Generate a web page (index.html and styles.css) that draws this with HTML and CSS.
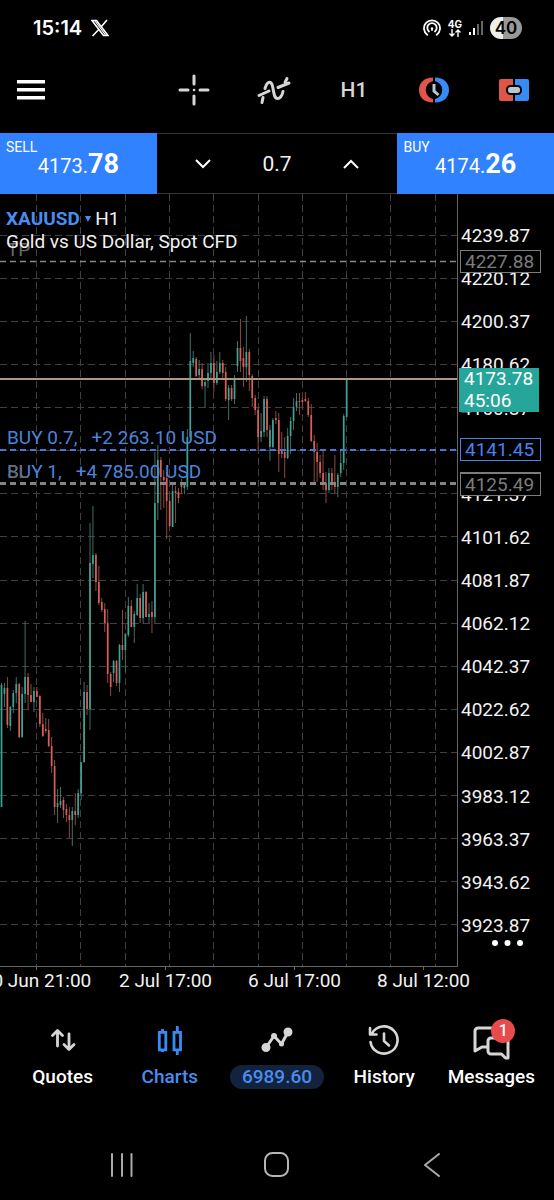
FILE: index.html
```
<!DOCTYPE html>
<html lang="en">
<head>
<meta charset="utf-8">
<meta name="viewport" content="width=device-width, initial-scale=1">
<title>XAUUSD H1</title>
<link rel="stylesheet" href="styles.css">
</head>
<body>
<div class="app">
  <header class="status">
    <div class="status-group">
      <span class="clock">15:14</span>
      <svg class="x-logo" width="18" height="18" viewBox="0 0 18 18" fill="none" stroke="#fff"><path stroke-width="1.600" d="M1 1.500h4.500L17 16.500h-4.500zM16 1L10.200 7.800M7.800 10.500L1.500 17"/><path stroke-width="1.200" d="M4 2L14.500 16"/></svg>
    </div>
    <div class="status-group status-right">
      <svg width="18" height="18" viewBox="0 0 18 18" fill="none" stroke="#fff" stroke-width="1.800" stroke-linecap="round"><path d="M4.300 15.800A8 8 0 1 1 13.700 15.800M6 12.500A4.700 4.700 0 1 1 12 12.500"/><circle cx="9" cy="9.500" r="1.200" fill="#fff" stroke="none"/><path d="M9 10v1"/></svg>
      <span class="network"><span>4G</span><svg width="12" height="8" viewBox="0 0 12 8" fill="none" stroke="#fff" stroke-width="1.400"><path d="M3 0v7M.5 4.500L3 7l2.500-2.500M9 8V1M6.500 3.500L9 1l2.500 2.500"/></svg></span>
      <svg width="14" height="16" viewBox="0 0 14 16"><path fill="#fff" d="M0 12h2v3H0zM4 8h2v7H4z"/><path fill="#666" d="M8 4h2v11H8zM12 1h2v14h-2z"/></svg>
      <span class="battery">40</span>
    </div>
  </header>

  <nav class="toolbar" aria-label="Chart tools">
    <button class="menu" aria-label="Menu"><svg width="28" height="20" viewBox="0 0 28 20" fill="#fff"><path d="M0 0h28v3.500H0zM0 8h28v3.500H0zM0 16h28v3.500H0z"/></svg></button>
    <div class="tools">
      <button aria-label="Crosshair"><svg width="32" height="32" viewBox="0 0 32 32" stroke="#d6d6d6" stroke-width="3" stroke-linecap="round"><path d="M16 2v8M16 22v8M2 16h8M22 16h8"/><path stroke-width="2.500" d="M16 16h.1"/></svg></button>
      <button aria-label="Indicators"><svg width="34" height="32" viewBox="0 0 34 32" fill="none" stroke="#d6d6d6" stroke-width="3" stroke-linecap="round"><path d="M2 21.500L12 17M21 13.500L32 9M5 28.500l1-5M8 14.500C10 7.500 14 6 15.500 12 17 19 17 24.500 20.500 24.500 23.500 24.500 25 22 26 17.500M28 8.500l2-4"/></svg></button>
      <button class="timeframe">H1</button>
      <button aria-label="Trading session"><svg width="32" height="26" viewBox="0 0 32 26" fill="none"><path fill="#df5549" d="M15 .5C6 .5 1 6 1 13s5 12.500 14 12.500V22a9.200 9.200 0 0 1 0-18z"/><path fill="#388bf5" d="M17 .5C26 .5 31 6 31 13S26 25.500 17 25.500V22a9.200 9.200 0 0 0 0-18z"/><path d="M16 7v7l4.500 4" stroke="#b9c8cf" stroke-width="3"/></svg></button>
      <button aria-label="One click trading"><svg width="32" height="24" viewBox="0 0 32 24"><path fill="#df5549" d="M3 1h12v22H3a2 2 0 0 1-2-2V3a2 2 0 0 1 2-2z"/><path fill="#388bf5" d="M17 1h12a2 2 0 0 1 2 2v18a2 2 0 0 1-2 2H17z"/><rect x="9" y="8" width="14" height="8" rx="3.500" fill="#b9c8cf" stroke="#000" stroke-width="2"/></svg></button>
    </div>
  </nav>

  <section class="trade" aria-label="One click trading">
    <button class="deal"><span class="deal-side">SELL</span><span class="deal-price">4173.<b>78</b></span></button>
    <div class="stepper">
      <button aria-label="Decrease volume"><svg width="16" height="10" viewBox="0 0 16 10" fill="none" stroke="#fff" stroke-width="2"><path d="M1 1l7 7 7-7"/></svg></button>
      <input type="text" value="0.7" aria-label="Volume">
      <button aria-label="Increase volume"><svg width="16" height="10" viewBox="0 0 16 10" fill="none" stroke="#fff" stroke-width="2"><path d="M1 9l7-7 7 7"/></svg></button>
    </div>
    <button class="deal"><span class="deal-side">BUY</span><span class="deal-price">4174.<b>26</b></span></button>
  </section>

  <main class="chart">
    <div class="plot">
      <svg class="plot-canvas" viewBox="0 194 458 773" preserveAspectRatio="none" role="img" aria-label="XAUUSD hourly candles">
        <g id="grid"></g>
        <g id="candles"></g>
        <g id="levels" fill="none">
          <path d="M0 261.500H457" stroke="#888" stroke-width="1.400" stroke-dasharray="6 4"/>
          <path d="M0 450H457" stroke="#4478dc" stroke-width="2" stroke-dasharray="6 4"/>
          <path d="M0 483.500H457" stroke="#858585" stroke-width="3" stroke-dasharray="6 4"/>
          <path d="M0 379H457" stroke="#ad9688" stroke-width="2"/>
        </g>
        <path d="M457.500 194V966.500" stroke="#666" fill="none"/>
        <path d="M0 966.500H458" stroke="#666" fill="none"/>
      </svg>
      <span class="order order-muted tp">TP</span>
      <span class="order first">BUY 0.7,&nbsp;&nbsp; +2 263.10 USD</span>
      <span class="order second">BUY 1,&nbsp;&nbsp; +4 785.00 USD</span>
      <span class="order order-muted sl">SL</span>
      <div class="title">
        <div><button class="symbol">XAUUSD <svg width="6" height="6" viewBox="0 0 6 6"><path fill="#4a8cf0" d="M0 0h6L3 6z"/></svg></button> H1</div>
        <div>Gold vs US Dollar, Spot CFD</div>
      </div>
    </div>
    <div class="prices">
      <span>4239.87</span><span>4220.12</span><span>4200.37</span><span>4180.62</span><span>4160.87</span><span>4141.12</span><span>4121.37</span><span>4101.62</span><span>4081.87</span><span>4062.12</span><span>4042.37</span><span>4022.62</span><span>4002.87</span><span>3983.12</span><span>3963.37</span><span>3943.62</span><span>3923.87</span>
      <div class="tag tag-tp">4227.88</div>
      <div class="tag tag-now">4173.78<br>45:06</div>
      <div class="tag tag-entry">4141.45</div>
      <div class="tag tag-sl">4125.49</div>
      <button class="more" aria-label="More"><svg width="32" height="6" viewBox="0 0 32 6" fill="#fff"><circle cx="3" cy="3" r="3"/><circle cx="15.500" cy="3" r="3"/><circle cx="28" cy="3" r="3"/></svg></button>
    </div>
  </main>
  <div class="dates"><span>30 Jun 21:00</span><span>2 Jul 17:00</span><span>6 Jul 17:00</span><span>8 Jul 12:00</span></div>

  <nav class="tabs" aria-label="Main">
    <a href="#quotes"><svg width="26" height="32" viewBox="0 0 26 32" fill="none" stroke="#d6d6d6" stroke-width="2.800" stroke-linecap="round" stroke-linejoin="round"><path d="M7.500 22V7M2.500 11.500l5-5 5 5M19 10v15M14 20.500l5 5 5-5"/></svg><span>Quotes</span></a>
    <a href="#charts" class="active"><svg width="26" height="32" viewBox="0 0 26 32" fill="none" stroke="#388bf5" stroke-width="2.800"><path d="M2.300 8.300h6.500v17.500H2.300zM5.500 5v3M5.500 26v2M17 8.300h6.500v17.500H17zM20.300 2v6M20.300 26v5"/></svg><span>Charts</span></a>
    <a href="#trade"><svg width="32" height="32" viewBox="0 0 32 32" fill="#d6d6d6" stroke="#d6d6d6" stroke-width="3" stroke-linejoin="round"><path fill="none" d="M5 23.500L13 12l7.500 8L27 8"/><circle cx="5" cy="23.500" r="3"/><circle cx="13" cy="12" r="1.500"/><circle cx="20.500" cy="20" r="1"/><circle cx="27" cy="8" r="3"/></svg><span class="pill">6989.60</span></a>
    <a href="#history"><svg width="34" height="32" viewBox="0 0 34 32" fill="none" stroke="#d6d6d6" stroke-width="2.600" stroke-linecap="round" stroke-linejoin="round"><path d="M5 9.500A13.600 13.600 0 1 1 3.500 18M3 4v6.500H9.500"/><path d="M17 9.500V17l5 4.500"/></svg><span>History</span></a>
    <a href="#messages"><span class="message-icon"><svg width="40" height="36" viewBox="0 0 40 36" fill="none" stroke="#d6d6d6" stroke-width="3" stroke-linejoin="round"><path d="M17 23h-6l-7 4V7a3 3 0 0 1 3-3h20a3 3 0 0 1 3 3v7"/><path d="M17 17a3 3 0 0 1 3-3h17v20h-2.500l-4-4H20a3 3 0 0 1-3-3z"/></svg><span class="badge">1</span></span><span>Messages</span></a>
  </nav>

  <footer class="system">
    <button aria-label="Recent apps"><svg width="24" height="24" viewBox="0 0 24 24" stroke="#aaa" stroke-width="2" stroke-linecap="round"><path d="M2 1v22M12 1v22M21.500 1v22"/></svg></button>
    <button aria-label="Home"><svg width="26" height="26" viewBox="0 0 26 26" fill="none" stroke="#b5b5b5" stroke-width="2"><rect x="1" y="1" width="23" height="23" rx="7.500"/></svg></button>
    <button aria-label="Back"><svg width="16" height="24" viewBox="0 0 16 24" fill="none" stroke="#aaa" stroke-width="2" stroke-linecap="round" stroke-linejoin="round"><path d="M15 1L1 12l14 11"/></svg></button>
  </footer>
</div>
<script src="chart.js"></script>
</body>
</html>
```
FILE: styles.css
```
* { box-sizing: border-box; }
body { margin: 0; background: #000; color: #f2f2f2; font-family: Roboto, "Liberation Sans", sans-serif; font-size: 19px; }
button, input { border: 0; padding: 0; margin: 0; background: none; color: inherit; font: inherit; }
svg { display: block; flex: none; }
a { color: inherit; text-decoration: none; }
.app { display: flex; flex-direction: column; }

.status { display: flex; justify-content: space-between; align-items: center; height: 56px; padding: 0 32px 0 33px; }
.status-group { display: flex; align-items: center; gap: 9px; }
.status-right { gap: 7px; }
.clock { font: 600 20px Inter, sans-serif; color: #fff; }
.network { display: flex; flex-direction: column; align-items: center; font: 700 10px/9px Inter, sans-serif; color: #fff; }
.battery { width: 32px; border-radius: 11px; background: linear-gradient(90deg, #eee 40%, #999 40%); color: #000; font: 600 17px/22px Inter, sans-serif; text-align: center; }

.toolbar { display: flex; justify-content: space-between; align-items: center; height: 68px; margin-bottom: 9px; padding-left: 17px; }
.tools { display: grid; grid-template-columns: repeat(5, 80px); }
.tools button { display: flex; justify-content: center; align-items: center; }
.timeframe { color: #d6d6d6; font-size: 21px; font-weight: 500; }

.trade { display: grid; grid-template-columns: 13fr 20fr 13fr; height: 61px; }
.deal { display: flex; flex-direction: column; background: #3182ff; color: #fff; padding: 6px; text-align: left; }
.deal-side { font-size: 14px; line-height: 16px; }
.deal-price { align-self: center; font-size: 20px; line-height: 18px; }
.deal-price b { font-size: 27px; font-weight: 700; }
.stepper { display: grid; grid-template-columns: 1fr 1fr 1fr; padding: 0 9px; border: solid #33353d; border-width: 1px 0; }
.stepper button { display: flex; justify-content: center; align-items: center; }
.stepper input { width: 100%; text-align: center; font-size: 21px; }

.chart { display: flex; }
.plot { position: relative; flex: 1; overflow: hidden; }
.plot-canvas { width: 100%; height: 773px; }
.title { position: absolute; left: 6px; top: 13px; line-height: 23px; }
.symbol { color: #4a8cf0; font-weight: 700; }
.symbol svg { display: inline-block; vertical-align: 3px; }
.order { position: absolute; left: 7px; color: #4a84dc; line-height: 22px; }
.order-muted { color: #6a6a6a; }
.tp { top: 45px; }
.sl { top: 267px; }
.first { top: 233px; }
.second { top: 267px; }
.prices { position: relative; width: 96px; display: grid; grid-auto-rows: 1fr; align-items: center; padding: 20px 0 20px 3px; }
.tag { position: absolute; left: 2px; padding-left: 4px; width: 81px; line-height: 21px; border: 1px solid; background: #000; }
.tag-tp { top: 56px; color: #7c7c7c; }
.tag-now { left: 1px; top: 174px; width: 80px; padding-left: 5px; line-height: 22px; border: 0; background: #26a69a; color: #fff; }
.tag-entry { top: 244px; color: #4a80ec; }
.tag-sl { top: 278px; border-top-width: 2px; color: #7c7c7c; }
.more { position: absolute; right: 30px; bottom: 21px; }
.dates { display: grid; grid-template-columns: repeat(4, 129px); margin-left: -28px; height: 33px; line-height: 21px; text-align: center; white-space: nowrap; }
.dates span::before { content: ""; display: block; width: 1px; height: 3px; margin: 0 auto; background: #666; }

.tabs { display: grid; grid-template-columns: repeat(5, 1fr); padding: 24px 9px 0; height: 112px; color: #fff; font-weight: 500; }
.tabs a { display: flex; flex-direction: column; align-items: center; gap: 9px; line-height: 24px; }
.tabs .active, .pill { color: #4a8cf0; }
.pill { padding: 0 12px; border-radius: 12px; background: #13233d; }
.message-icon { position: relative; height: 32px; }
.badge { position: absolute; right: -4px; top: -5px; width: 24px; border-radius: 12px; background: #e74b4b; font-size: 16px; line-height: 24px; text-align: center; }

.system { display: grid; grid-template-columns: repeat(3, 1fr); height: 88px; padding: 18px 44px 0; }
.system button { display: flex; justify-content: center; align-items: center; }
```
FILE: chart.js
```
// Each candle: direction, high, body top, body bottom, low (chart units).
const candles = `
g683,685,807,807 g683,688,694,707 r677,688,725,728 g706,707,726,731 g690,693,707,713 g677,684,693,703
r683,684,737,738 g687,694,737,738 g621,677,694,703 r673,677,695,710 r684,695,702,702 g687,691,702,712
r687,691,697,697 r695,696,724,727 r713,724,736,737 r718,729,731,733 r719,730,746,747 r737,746,766,773
r760,766,807,815 g789,803,807,823 g787,801,805,808 r797,800,810,818 r804,809,815,822 r807,815,820,838
g807,811,820,846 r793,811,815,825 g789,793,815,818 g762,762,793,800 g682,692,762,763 r685,692,709,715
g523,563,709,730 g506,555,564,578 r553,555,582,591 r566,582,603,605 r598,602,610,612 r603,609,623,632
r609,623,674,683 r672,674,687,696 g660,661,673,682 r660,661,683,686 g644,645,683,692 r610,645,650,660
g633,634,650,672 g597,606,635,637 r600,606,627,627 g611,614,627,643 g584,598,615,616 r594,598,618,623
g584,592,618,624 r591,592,617,617 g603,614,617,623 r601,612,617,633 g452,503,617,623 g445,460,503,520
r457,460,477,510 r470,477,480,508 r472,478,501,539 r497,501,526,527 g483,491,527,527 r486,491,493,523
r488,492,498,503 r479,484,487,494 g483,485,488,494 g429,437,487,490 g333,361,437,443 g351,358,363,367
r357,359,376,377 g360,369,375,378 r363,369,386,389 g380,382,386,408 g363,373,381,388 g352,363,373,378
r355,363,383,392 g361,372,383,385 g352,363,372,374 r360,363,373,378 r367,372,399,401 g385,388,400,420
r385,388,399,401 g375,378,399,404 g341,348,366,372 r319,348,361,372 r347,358,367,387 g316,352,367,382
r349,352,375,391 r374,376,398,407 r395,398,410,415 r407,410,437,450 g413,431,437,442 g396,399,432,437
r396,399,430,437 g425,430,447,461 g418,420,447,448 r411,418,420,424 r413,420,454,472 r432,451,454,458
r437,452,458,478 g428,436,458,459 g417,421,436,454 g398,407,421,430 g393,401,407,411 r393,401,402,415
r397,400,402,407 r392,399,401,402 r398,401,415,417 r404,415,441,442 r435,441,452,482 r443,452,462,482
r455,462,473,478 r451,473,483,490 r472,483,490,503 g468,473,490,493 r468,473,483,490 r455,482,487,493
g473,475,487,497 g451,463,473,477 g414,416,463,470 g379,379,417,417`.trim().split(/\s+/);

const NS = "http://www.w3.org/2000/svg";
function path(parent, d, attrs) {
  const el = document.createElementNS(NS, "path");
  el.setAttribute("d", d);
  for (const key in attrs) el.setAttribute(key, attrs[key]);
  document.getElementById(parent).appendChild(el);
}

const grid = { stroke: "#404040", "stroke-width": 1, "stroke-dasharray": "7 4", fill: "none" };
for (let i = 0; i < 10; i++) path("grid", `M${Math.round(36 + i * 44.3) + 0.5} 194V966`, grid);
for (let i = 0; i < 17; i++) path("grid", `M0 ${Math.round(235 + i * 43.07) + 0.5}H460`, grid);

candles.forEach((candle, i) => {
  const up = candle[0] === "g";
  const [high, top, bottom, low] = candle.slice(1).split(",");
  const x = 1.5 + i * 2.95;
  path("candles", `M${x} ${high}V${low}`, { stroke: up ? "#3f6f66" : "#8c4843", "stroke-width": 1 });
  path("candles", `M${x} ${top}V${bottom}`, { stroke: up ? "#3fa393" : "#d9605a", "stroke-width": 1.7 });
});
```
